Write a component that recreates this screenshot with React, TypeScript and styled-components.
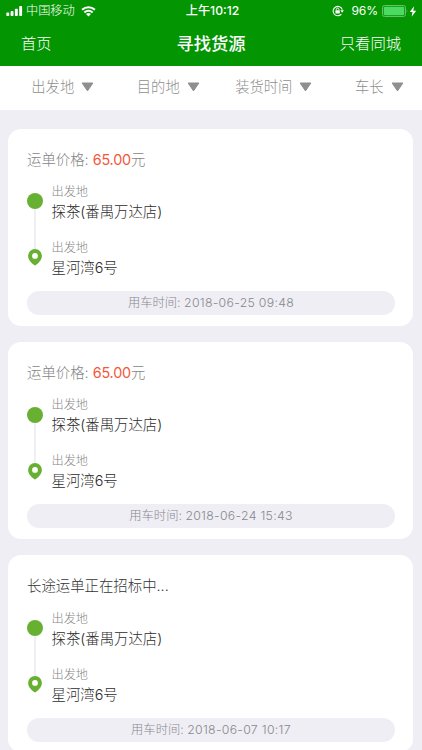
import React from "react";
import styled, { createGlobalStyle } from "styled-components";

const GlobalStyle = createGlobalStyle`
  * { box-sizing: border-box; }
  html, body { margin: 0; height: 750px; overflow: hidden; background: #efeef5; }
  body { font-family: Inter, "Noto Sans CJK SC", sans-serif; color: #444; }
`;

const Screen = styled.div`
  width: 422px;
  height: 750px;
  overflow: hidden;
  background: #efeef5;
`;

const Header = styled.header`
  height: 65.5px;
  background: #039602;
  color: #fff;
`;

const StatusBar = styled.div`
  height: 22px;
  display: grid;
  grid-template-columns: 1fr 60px 1fr;
  align-items: center;
  padding: 0 5px 0 6px;
  font-size: 12.2px;
  line-height: 22px;
`;

const StatusGroup = styled.div<{ $end?: boolean }>`
  display: flex;
  align-items: center;
  justify-content: ${(p) => (p.$end ? "flex-end" : "flex-start")};
  white-space: nowrap;

  svg { display: block; flex: none; }
`;

const Carrier = styled.span`
  margin: 0 6px 0 3px;
  font-weight: 300;
`;

const Clock = styled.div`
  padding-left: 2px;
  text-align: center;
  white-space: nowrap;
  font-weight: 500;
  font-size: 12.2px;
`;

const Percent = styled.span`
  margin: 0 4px 0 7px;
  font-size: 12.1px;
  letter-spacing: -0.1px;
`;

const NavBar = styled.nav`
  height: 43px;
  display: grid;
  grid-template-columns: 1fr auto 1fr;
  align-items: center;
  padding: 0 21px 0 21px;
  line-height: 43px;
`;

const NavLink = styled.a<{ $end?: boolean }>`
  font-size: 15.3px;
  font-weight: 300;
  text-align: ${(p) => (p.$end ? "right" : "left")};
`;

const Title = styled.h1`
  margin: 0;
  font-size: 17.3px;
  font-weight: 500;
`;

const FilterBar = styled.div`
  height: 44.5px;
  display: grid;
  grid-template-columns: repeat(4, 105.5px);
  background: #fff;
`;

const Filter = styled.button`
  display: flex;
  align-items: center;
  justify-content: center;
  gap: 7px;
  padding: 0 0 2px 20px;
  border: 0;
  background: none;
  color: #8f8f8f;
  font: 300 14.3px/42px Inter, "Noto Sans CJK SC", sans-serif;
  white-space: nowrap;
`;

const List = styled.main`
  display: flex;
  flex-direction: column;
  gap: 16.4px;
  padding: 18.5px 9px 0 8px;
`;

const Card = styled.article`
  flex: none;
  height: 197px;
  padding: 20px 18px 0 19px;
  border-radius: 13px;
  background: #fff;
`;

const Heading = styled.div<{ $muted?: boolean }>`
  height: 22px;
  font-size: 14.4px;
  line-height: 22px;
  font-weight: 300;
  color: ${(p) => (p.$muted ? "#858585" : "#333")};
`;

const Price = styled.span`
  color: #f4583c;
  font-weight: 400;
  letter-spacing: -0.2px;
`;

const Route = styled.div`
  display: grid;
  grid-template-columns: 16px 1fr;
  column-gap: 8.5px;
  height: 112px;
  margin-top: 10.5px;
`;

const Track = styled.div`
  display: flex;
  flex-direction: column;
  align-items: center;
  padding-top: 12.2px;

  svg { display: block; flex: none; }
`;

const Dot = styled.span`
  width: 16px;
  height: 16px;
  border-radius: 50%;
  background: #68b032;
`;

const Line = styled.span`
  width: 2px;
  height: 40px;
  background: #efeff6;
`;

const Stops = styled.div`
  padding-top: 0.8px;
`;

const Stop = styled.div`
  height: 56.3px;
`;

const StopLabel = styled.div`
  height: 20px;
  font-size: 12.2px;
  line-height: 20px;
  font-weight: 300;
  color: #858585;
`;

const StopName = styled.div`
  height: 20px;
  font-size: 14.4px;
  line-height: 20px;
  font-weight: 300;
  color: #2c2c2c;
`;

const TimePill = styled.div`
  height: 24px;
  margin-top: -2px;
  border-radius: 12px;
  background: #efeef5;
  color: #88888c;
  font-size: 12.3px;
  line-height: 24px;
  font-weight: 300;
  text-align: center;
`;

const Digits = styled.span`
  font-weight: 300;
  letter-spacing: 0.3px;
`;

const Signal = () => (
  <svg width="17" height="12" viewBox="0 0 17 12" fill="#fff">
    <rect x="0.3" y="7.6" width="2.9" height="3.4" rx="0.8" />
    <rect x="4.6" y="6.1" width="2.9" height="4.9" rx="0.8" />
    <rect x="8.9" y="3.8" width="2.9" height="7.2" rx="0.8" />
    <rect x="13.2" y="1" width="2.9" height="10" rx="0.8" />
  </svg>
);

const Wifi = () => (
  <svg width="15" height="11" viewBox="0 0 15 11" fill="none" stroke="#fff" strokeWidth="2.1">
    <path d="M1.1 3.8C4.8.4 10.2.4 13.9 3.8" />
    <path d="M3.4 6.4C5.7 4.2 9.3 4.2 11.6 6.4" />
    <path d="M7.5 10.5 5 8.1Q7.5 6 10 8.1Z" fill="#fff" stroke="none" />
  </svg>
);

const RotationLock = () => (
  <svg width="12" height="12" viewBox="0 0 12 12" fill="none" stroke="#fff">
    <path d="M9.4 9.1A4.7 4.7 0 1 1 10.3 4.7" strokeWidth="1.1" />
    <path d="M8.3 5.2h3.6L10.2 7.7Z" fill="#fff" stroke="none" />
    <rect x="3.4" y="5.2" width="4.4" height="3.3" rx=".4" fill="#fff" stroke="none" />
    <path d="M4.3 5.3V4.4a1.3 1.3 0 0 1 2.6 0v.9" strokeWidth=".9" />
  </svg>
);

const Battery = () => (
  <svg width="27" height="12" viewBox="0 0 27 12">
    <rect x=".5" y=".5" width="23" height="11" rx="2" fill="none" stroke="#6abf69" />
    <rect x="1.8" y="1.8" width="20.4" height="8.4" rx="1" fill="#4cd964" />
    <path d="M24.8 4.2q1.3 1.8 0 3.6Z" fill="#76c476" />
  </svg>
);

const Bolt = () => (
  <svg width="8" height="11" viewBox="0 0 8 11" fill="#fff">
    <path d="M5 .3.8 6.1h2.7L2.6 10.7 7.2 4.7H4.3Z" />
  </svg>
);

const Caret = () => (
  <svg width="13" height="10" viewBox="0 0 13 10">
    <path d="M1.1 1h10.8L6.5 8.9Z" fill="#8f8f8f" stroke="#8f8f8f" strokeWidth="1" strokeLinejoin="round" />
  </svg>
);

const Pin = () => (
  <svg width="14" height="17" viewBox="0 0 14 17">
    <path
      d="M7 0A6.9 6.9 0 0 0 .1 6.9C.1 11 3.7 14 6.1 16.1q.9.7 1.8 0C10.3 14 13.9 11 13.9 6.9A6.9 6.9 0 0 0 7 0Zm0 4a2.9 2.9 0 1 1 0 5.8A2.9 2.9 0 0 1 7 4Z"
      fill="#68b032"
      fillRule="evenodd"
    />
  </svg>
);

const filters = ["出发地", "目的地", "装货时间", "车长"];

const orders = [
  { price: "65.00", time: "2018-06-25 09:48" },
  { price: "65.00", time: "2018-06-24 15:43" },
  { price: null, time: "2018-06-07 10:17" },
];

export default function App() {
  return (
    <Screen>
      <GlobalStyle />
      <Header>
        <StatusBar>
          <StatusGroup>
            <Signal />
            <Carrier>中国移动</Carrier>
            <Wifi />
          </StatusGroup>
          <Clock>上午10:12</Clock>
          <StatusGroup $end>
            <RotationLock />
            <Percent>96%</Percent>
            <Battery />
            <Bolt />
          </StatusGroup>
        </StatusBar>
        <NavBar>
          <NavLink>首页</NavLink>
          <Title>寻找货源</Title>
          <NavLink $end>只看同城</NavLink>
        </NavBar>
      </Header>
      <FilterBar>
        {filters.map((label) => (
          <Filter key={label}>
            {label}
            <Caret />
          </Filter>
        ))}
      </FilterBar>
      <List>
        {orders.map((o) => (
          <Card key={o.time}>
            {o.price ? (
              <Heading $muted>
                运单价格: <Price>{o.price}</Price>元
              </Heading>
            ) : (
              <Heading>长途运单正在招标中...</Heading>
            )}
            <Route>
              <Track>
                <Dot />
                <Line />
                <Pin />
              </Track>
              <Stops>
                <Stop>
                  <StopLabel>出发地</StopLabel>
                  <StopName>探茶(番禺万达店)</StopName>
                </Stop>
                <Stop>
                  <StopLabel>出发地</StopLabel>
                  <StopName>星河湾6号</StopName>
                </Stop>
              </Stops>
            </Route>
            <TimePill>
              用车时间: <Digits>{o.time}</Digits>
            </TimePill>
          </Card>
        ))}
      </List>
    </Screen>
  );
}
